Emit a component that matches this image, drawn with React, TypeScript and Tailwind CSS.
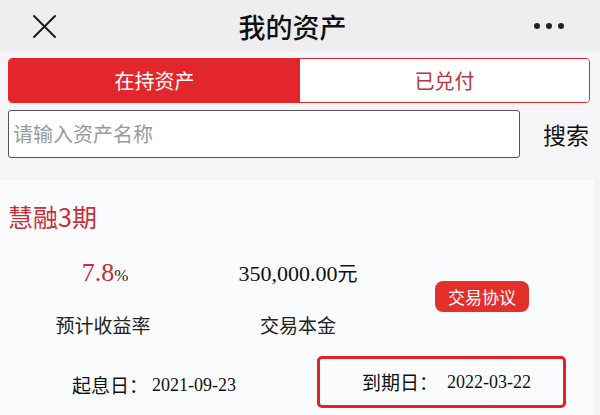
import React from "react";

const cjk = { fontFamily: '"Noto Sans CJK SC", "Noto Sans", sans-serif' };
const serif = { fontFamily: '"Liberation Serif", "Noto Sans CJK SC", serif' };

export default function App() {
  return (
    <div className="w-[600px] h-[415px] overflow-hidden bg-[#f5f5f7] text-[#111]" style={cjk}>
      {/* 顶部导航 */}
      <div className="h-[52px] bg-[#eeeef0] flex items-center px-[32px] relative">
        <svg width="25" height="25" viewBox="0 0 25 25" className="shrink-0">
          <path d="M2 2 L23 23 M23 2 L2 23" stroke="#1a1a1a" strokeWidth="2" strokeLinecap="round" />
        </svg>
        <div className="flex-1 text-center text-[27px] font-medium leading-none pr-[6px]">我的资产</div>
        <div className="flex items-center gap-[6px] mr-[4px]">
          <span className="w-[6px] h-[6px] rounded-full bg-[#222]" />
          <span className="w-[6px] h-[6px] rounded-full bg-[#222]" />
          <span className="w-[6px] h-[6px] rounded-full bg-[#222]" />
        </div>
      </div>

      {/* 标签 */}
      <div className="px-[8px] pt-[6px]">
        <div className="w-[582px] h-[45px] flex border border-[#e3262b] rounded-[4px] overflow-hidden">
          <div className="w-[291px] bg-[#e3262b] text-white text-[20px] flex items-center justify-center">在持资产</div>
          <div className="flex-1 bg-white text-[#bd3343] text-[20px] flex items-center justify-center">已兑付</div>
        </div>

        {/* 搜索 */}
        <div className="flex items-center mt-[7px]">
          <div className="w-[512px] h-[48px] bg-white border border-[#555] rounded-[3px] flex items-center pl-[4px] text-[20px] text-[#9a9a9a]">
            请输入资产名称
          </div>
          <div className="ml-auto text-[23px] pr-[3px]">搜索</div>
        </div>
      </div>

      {/* 资产卡片 */}
      <div className="mt-[22px] bg-[#fafbfd] h-[235px] mr-[6px] pt-[20px]">
        <div className="pl-[8px] text-[25px] leading-[32px] text-[#c5303c]">慧融3期</div>

        <div className="flex mt-[26px]">
          <div className="w-[206px] flex flex-col items-center">
            <div className="h-[30px] flex items-baseline pl-[4px]" style={serif}>
              <span className="text-[26px] leading-[30px] text-[#c5303c]">7.8</span>
              <span className="text-[17px] text-[#222]">%</span>
            </div>
            <div className="mt-[24px] h-[26px] text-[19px] leading-[26px] text-[#222]">预计收益率</div>
          </div>
          <div className="w-[184px] flex flex-col items-center">
            <div className="h-[30px] text-[22px] leading-[30px] text-[#111]" style={serif}>
              350,000.00<span style={cjk} className="text-[20px]">元</span>
            </div>
            <div className="mt-[24px] h-[26px] text-[19px] leading-[26px] text-[#222]">交易本金</div>
          </div>
          <div className="w-[184px] flex flex-col items-center">
            <div className="mt-[23px] h-[31px] w-[94px] bg-[#e4302b] rounded-[8px] text-white text-[17px] flex items-center justify-center">
              交易协议
            </div>
          </div>
        </div>

        {/* 日期 */}
        <div className="flex items-center mt-[18px]">
          <div className="pl-[72px] w-[317px] flex items-center text-[19px] text-[#111] pt-[6px]">
            <span>起息日：</span>
            <span className="ml-[4px] text-[18px]" style={serif}>2021-09-23</span>
          </div>
          <div className="w-[249px] h-[52px] border-[3px] border-[#e0232a] rounded-[5px] flex items-center pl-[42px] text-[19px] text-[#111]">
            <span>到期日：</span>
            <span className="ml-[9px] text-[18px]" style={serif}>2022-03-22</span>
          </div>
        </div>
      </div>
    </div>
  );
}
